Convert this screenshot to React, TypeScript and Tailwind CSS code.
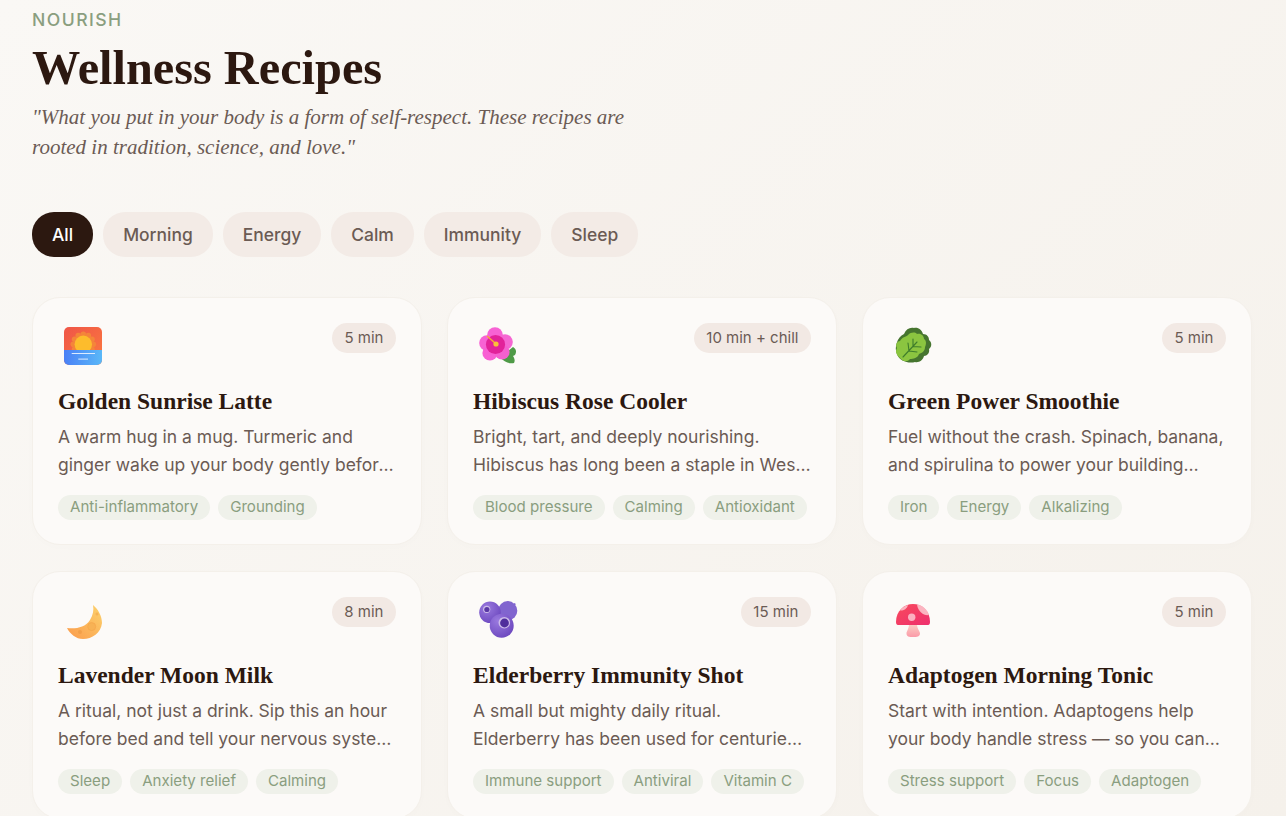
import React from "react";

const serif = "font-['Liberation_Serif',serif]";

function Sunrise() {
  const scallops = [0, 30, 60, 90, 120, 150, 180, 210, 240, 270, 300, 330];
  return (
    <svg width="40" height="40" viewBox="0 0 40 40">
      <defs>
        <linearGradient id="sr1" x1="0" y1="0" x2="1" y2="1"><stop offset="0" stopColor="#ef5548" /><stop offset="1" stopColor="#fc7a3e" /></linearGradient>
        <linearGradient id="sr2" x1="0" y1="0" x2="1" y2="0"><stop offset="0" stopColor="#4a80f6" /><stop offset="1" stopColor="#5ab8f8" /></linearGradient>
        <clipPath id="srclip"><rect x="1" y="1" width="38" height="38" rx="5" /></clipPath>
      </defs>
      <g clipPath="url(#srclip)">
        <rect x="1" y="1" width="38" height="38" fill="url(#sr1)" />
        {scallops.map((a) => (
          <circle key={a} cx={20.3 + 10 * Math.cos((a * Math.PI) / 180)} cy={18.3 + 10 * Math.sin((a * Math.PI) / 180)} r="2.8" fill="#f4853a" />
        ))}
        <circle cx="20.3" cy="18.3" r="10" fill="#f4853a" />
        <circle cx="20.3" cy="18.3" r="8.7" fill="#fdbc2c" />
        <rect x="1" y="24" width="38" height="16" fill="url(#sr2)" />
        <rect x="8.7" y="27" width="23.3" height="1" fill="#dcebff" />
        <rect x="15.3" y="32.6" width="9.7" height="1" fill="#dcebff" />
      </g>
    </svg>
  );
}

function Hibiscus() {
  return (
    <svg width="40" height="40" viewBox="0 0 40 40">
      <path d="M30 25 L35 21 C38 23 39 25 37 29 L35 30 C37 33 37 35 36 37 C31 38 26 36 22 31Z" fill="#4f9a47" />
      <circle cx="17" cy="9" r="7.8" fill="#f762d4" />
      <circle cx="9" cy="17" r="7.8" fill="#f762d4" />
      <circle cx="27" cy="16" r="7.8" fill="#f566d2" />
      <circle cx="12" cy="27" r="7.6" fill="#f85fd3" />
      <circle cx="24" cy="26" r="7.6" fill="#f560cf" />
      <circle cx="17.5" cy="18.5" r="9.6" fill="#e2229a" />
      <path d="M9 10 L17 17" stroke="#f4a93a" strokeWidth="1.6" />
      <circle cx="18" cy="18" r="2.6" fill="#fbbf3a" />
    </svg>
  );
}

function Leaf() {
  return (
    <svg width="40" height="40" viewBox="0 0 40 40">
      <path d="M11 8 C13 3 17 1 21 2 C25 1 29 4 30 8 C34 8 36 11 36 14 C39 16 39 21 36 23 C37 27 34 30 31 30 C30 34 26 37 22 36 C16 38 6 35 4 28 C1 22 4 11 11 8Z" fill="#46752f" />
      <path d="M7 15 C9 11 13 11 15 9 C18 6 22 6 24 8 C28 7 31 10 31 13 C34 15 33 19 32 21 C32 25 29 27 26 28 C25 32 20 33 17 33 C14 37 9 35 7 32 C3 29 2 25 4 22 C2 19 4 15 7 15Z" fill="#8bc540" />
      <path d="M10 31 L24 16 M16 25 L15 17 M20 20.5 L20 13 M16 25 L24 26 M20 20.5 L28 21" stroke="#3f7d2b" strokeWidth="1.1" fill="none" strokeLinecap="round" />
    </svg>
  );
}

function Moon() {
  return (
    <svg width="40" height="40" viewBox="0 0 40 40">
      <defs>
        <linearGradient id="mn" x1="1" y1="0" x2="0" y2="1"><stop offset="0" stopColor="#fcd26c" /><stop offset="1" stopColor="#fb9b4c" /></linearGradient>
      </defs>
      <path d="M30 5 C35 9 39 16 39 23 C38 33 29 39 20 39 C13 39 7 34 4 28 C12 29 22 28 27 20 C30 15 31 10 30 5Z" fill="url(#mn)" />
      <circle cx="28.7" cy="26.6" r="4" fill="#f7b255" stroke="#f5a348" strokeWidth="0.6" />
      <circle cx="17" cy="32" r="2" fill="#ee9a45" opacity="0.7" />
      <circle cx="34" cy="14" r="1.5" fill="#f4a94e" opacity="0.7" />
    </svg>
  );
}

function Berries() {
  return (
    <svg width="40" height="40" viewBox="0 0 40 40">
      <defs>
        <radialGradient id="bb" cx="0.35" cy="0.3" r="0.8"><stop offset="0" stopColor="#9a7adf" /><stop offset="1" stopColor="#6a45bd" /></radialGradient>
      </defs>
      <path d="M36 3 L38 4 L36 6Z" fill="#7c5ccc" />
      <circle cx="29.7" cy="10.7" r="9.6" fill="#8165cf" />
      <circle cx="12" cy="12.3" r="10.8" fill="url(#bb)" />
      <circle cx="8.7" cy="9.3" r="3.6" fill="#cdbce9" />
      <circle cx="8.9" cy="9.5" r="2.6" fill="#5a38a6" />
      <circle cx="23.7" cy="25.7" r="12" fill="url(#bb)" />
      <circle cx="26.3" cy="22.7" r="5.8" fill="#cdbce9" />
      <circle cx="26.5" cy="23" r="4.4" fill="#4f2e9c" />
    </svg>
  );
}

function Mushroom() {
  return (
    <svg width="40" height="40" viewBox="0 0 40 40">
      <defs>
        <linearGradient id="ms" x1="0" y1="0" x2="0" y2="1"><stop offset="0" stopColor="#fbd0c5" /><stop offset="1" stopColor="#fb9aa8" /></linearGradient>
        <linearGradient id="mc" x1="0" y1="0" x2="1" y2="1"><stop offset="0" stopColor="#f84a5c" /><stop offset="1" stopColor="#ee2f6e" /></linearGradient>
      </defs>
      <path d="M16 24 L24 24 C24 29 27 31 27 33.5 C27 36.5 24 37 20 37 C16 37 13.5 36.5 13.5 33.5 C13.5 31 16 29 16 24Z" fill="url(#ms)" />
      <path d="M3 22 C3 11 11 4 20 4 C29 4 37 11 37 22 C37 24.5 36 25 34 25 L6 25 C4 25 3 24.5 3 22Z" fill="url(#mc)" />
      <circle cx="18.7" cy="17.3" r="3.7" fill="#fbb0c0" />
      <path d="M24 4.5 C29 5 34 9 36 15 C31 16 25 12 24 4.5Z" fill="#fbb4c0" />
      <path d="M15 5 C12 6 9 7.5 7 10.5 C10 11 14 9 15 5Z" fill="#fbb4c0" />
    </svg>
  );
}

const filters = ["All", "Morning", "Energy", "Calm", "Immunity", "Sleep"];

const recipes = [
  { Icon: Sunrise, time: "5 min", title: "Golden Sunrise Latte", desc: "A warm hug in a mug. Turmeric and ginger wake up your body gently before the day begins, with warmth and care.", tags: ["Anti-inflammatory", "Grounding"] },
  { Icon: Hibiscus, time: "10 min + chill", title: "Hibiscus Rose Cooler", desc: "Bright, tart, and deeply nourishing. Hibiscus has long been a staple in West African and Caribbean homes for generations.", tags: ["Blood pressure", "Calming", "Antioxidant"] },
  { Icon: Leaf, time: "5 min", title: "Green Power Smoothie", desc: "Fuel without the crash. Spinach, banana, and spirulina to power your building sessions all through the long day.", tags: ["Iron", "Energy", "Alkalizing"] },
  { Icon: Moon, time: "8 min", title: "Lavender Moon Milk", desc: "A ritual, not just a drink. Sip this an hour before bed and tell your nervous system that it is safe to rest now.", tags: ["Sleep", "Anxiety relief", "Calming"] },
  { Icon: Berries, time: "15 min", title: "Elderberry Immunity Shot", desc: "A small but mighty daily ritual. Elderberry has been used for centuries to support the body through the cold season.", tags: ["Immune support", "Antiviral", "Vitamin C"] },
  { Icon: Mushroom, time: "5 min", title: "Adaptogen Morning Tonic", desc: "Start with intention. Adaptogens help your body handle stress — so you can show up fully for the work ahead of you.", tags: ["Stress support", "Focus", "Adaptogen"] },
];

export default function App() {
  return (
    <div className="h-[816px] overflow-hidden bg-[linear-gradient(135deg,#faf8f5_0%,#f5f1eb_100%)] pl-8 pr-[34px] pt-[9px] font-['Inter',sans-serif]">
      <p className="text-[17.6px] leading-[22px] font-medium tracking-[1.45px] text-[#8a9e7f]">NOURISH</p>
      <h1 className={`${serif} mt-[7px] text-[48.3px] leading-[60px] font-bold text-[#2c1810]`}>Wellness Recipes</h1>
      <p className={`${serif} mt-[4px] w-[600px] text-[21px] leading-[30px] italic text-[#6b5b54]`}>
        "What you put in your body is a form of self-respect. These recipes are rooted in tradition, science, and love."
      </p>
      <div className="mt-[50px] flex gap-[10px]">
        {filters.map((f, i) => (
          <span
            key={f}
            className={`flex h-[45px] items-center rounded-[22px] px-5 pt-[2px] text-[17.45px] font-medium ${i === 0 ? "bg-[#2c1810] text-white" : "bg-[#f3ebe6] text-[#6b5b54]"}`}
          >
            {f}
          </span>
        ))}
      </div>
      <div className="mt-[40px] grid grid-cols-3 gap-x-[25px] gap-y-[26px]">
        {recipes.map(({ Icon, time, title, desc, tags }) => (
          <div key={title} className="h-[248px] rounded-[28px] border border-[#f4f0ea] bg-[#fcfaf8] px-[25px] pt-[25px] shadow-[0_2px_12px_rgba(44,24,16,0.01)]">
            <div className="flex items-start justify-between">
              <div className="mt-[3px] ml-[5px]">
                <Icon />
              </div>
              <span className="flex h-[30px] items-center rounded-[15px] bg-[#f2e9e4] px-[12.6px] text-[15px] text-[#6b5b54]">{time}</span>
            </div>
            <h3 className={`${serif} mt-[20px] text-[23.5px] leading-[30px] font-bold text-[#2c1810]`}>{title}</h3>
            <p className="mt-[7px] line-clamp-2 text-[17.5px] leading-[28px] text-[#6b5b54]">{desc}</p>
            <div className="mt-[16px] flex gap-2">
              {tags.map((t) => (
                <span key={t} className="flex h-[25px] items-center rounded-[13px] bg-[#eff1ea] px-3 text-[15.08px] text-[#8a9e7f]">{t}</span>
              ))}
            </div>
          </div>
        ))}
      </div>
    </div>
  );
}
